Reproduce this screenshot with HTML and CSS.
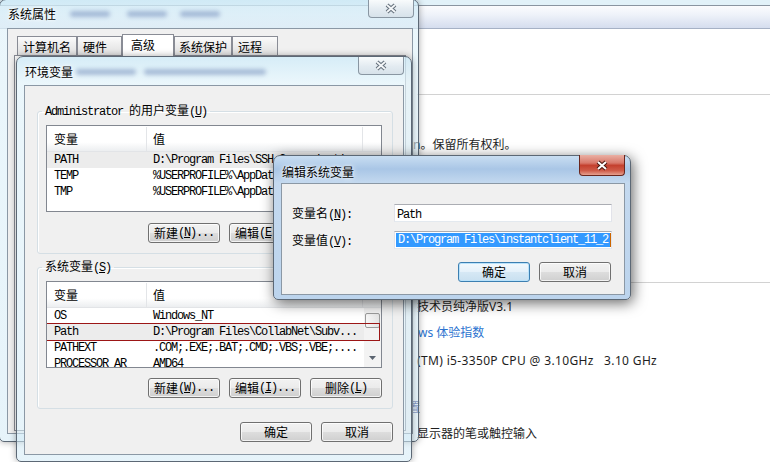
FILE: index.html
```html
<!DOCTYPE html>
<html lang="zh-CN">
<head>
    <meta charset="UTF-8">
    <meta name="viewport" content="width=device-width, initial-scale=1.0">
    <title>环境变量</title>
    <link rel="stylesheet" href="styles.css">
</head>
<body>
<div class="desktop">

    <!-- control panel "system" page behind the dialogs -->
    <div class="panel">
        <div class="panel-glass"></div>
        <div class="panel-bar"></div>
        <div class="panel-body">
            <hr class="panel-rule first">
            <p class="panel-line copy">n。保留所有权利。</p>
            <hr class="panel-rule second">
            <p class="panel-line edition">技术员纯净版V3.1</p>
            <p class="panel-line link">ws 体验指数</p>
            <p class="panel-line cpu">(TM) i5-3350P CPU @ 3.10GHz   3.10 GHz</p>
            <p class="panel-line heading">设置</p>
            <p class="panel-line pen">显示器的笔或触控输入</p>
        </div>
    </div>

    <!-- 系统属性 -->
    <div class="win win-idle sysprops">
        <div class="win-title">
            <span class="win-caption">系统属性</span>
            <span class="ghost sp1"></span>
            <span class="ghost sp2"></span>
            <span class="ghost sp3"></span>
        </div>
        <button class="win-close">
            <svg width="14" height="11" viewBox="0 0 14 11"><path d="M3 2l8 7M11 2l-8 7" stroke="#66727e" stroke-width="4"/><path d="M3 2l8 7M11 2l-8 7" stroke="#f4f7f9" stroke-width="1.8"/></svg>
        </button>
        <div class="win-client sys-client">
            <div class="tabs">
                <span class="tab t1">计算机名</span>
                <span class="tab t2">硬件</span>
                <span class="tab t3 current">高级</span>
                <span class="tab t4">系统保护</span>
                <span class="tab t5">远程</span>
            </div>
            <div class="tab-page"></div>
        </div>
    </div>

    <!-- 环境变量 -->
    <div class="win win-idle envvars">
        <div class="win-title">
            <span class="win-caption">环境变量</span>
            <span class="ghost ev1"></span>
            <span class="ghost ev2"></span>
        </div>
        <button class="win-close">
            <svg width="14" height="11" viewBox="0 0 14 11"><path d="M3 2l8 7M11 2l-8 7" stroke="#66727e" stroke-width="4"/><path d="M3 2l8 7M11 2l-8 7" stroke="#f4f7f9" stroke-width="1.8"/></svg>
        </button>
        <div class="win-client env-client">
            <fieldset class="group">
                <legend><span class="m">Administrator </span>的用户变量<span class="m">(<u>U</u>)</span></legend>
                <div class="list">
                    <div class="list-head">
                        <span class="col-name">变量</span>
                        <span class="col-value">值</span>
                        <span class="col-rest"></span>
                    </div>
                    <div class="list-body">
                        <div class="rows">
                            <div class="row picked"><span class="col-name m">PATH</span><span class="col-value m">D:\Program Files\SSH Communications Sec...</span></div>
                            <div class="row"><span class="col-name m">TEMP</span><span class="col-value m">%USERPROFILE%\AppData\Local\Temp</span></div>
                            <div class="row"><span class="col-name m">TMP</span><span class="col-value m">%USERPROFILE%\AppData\Local\Temp</span></div>
                        </div>
                    </div>
                </div>
                <div class="btn-row">
                    <button class="btn">新建<span class="m">(<u>N</u>)...</span></button>
                    <button class="btn">编辑<span class="m">(<u>E</u>)...</span></button>
                    <button class="btn">删除<span class="m">(<u>D</u>)</span></button>
                </div>
            </fieldset>

            <fieldset class="group second">
                <legend>系统变量<span class="m">(<u>S</u>)</span></legend>
                <div class="list">
                    <div class="list-head">
                        <span class="col-name">变量</span>
                        <span class="col-value">值</span>
                        <span class="col-rest"></span>
                    </div>
                    <div class="list-body">
                        <div class="rows">
                            <div class="row"><span class="col-name m">OS</span><span class="col-value m">Windows_NT</span></div>
                            <div class="row picked"><span class="col-name m">Path</span><span class="col-value m">D:\Program Files\CollabNet\Subv...</span><span class="mark"></span></div>
                            <div class="row"><span class="col-name m">PATHEXT</span><span class="col-value m">.COM;.EXE;.BAT;.CMD;.VBS;.VBE;....</span></div>
                            <div class="row"><span class="col-name m">PROCESSOR_AR</span><span class="col-value m">AMD64</span></div>
                        </div>
                        <div class="scrollbar">
                            <span class="thumb"></span>
                            <svg class="arrow" width="7" height="4" viewBox="0 0 7 4"><path d="M0 0h7L3.5 4z" fill="#5b6470"/></svg>
                        </div>
                    </div>
                </div>
                <div class="btn-row">
                    <button class="btn">新建<span class="m">(<u>W</u>)...</span></button>
                    <button class="btn">编辑<span class="m">(<u>I</u>)...</span></button>
                    <button class="btn">删除<span class="m">(<u>L</u>)</span></button>
                </div>
            </fieldset>

            <div class="env-actions">
                <button class="btn">确定</button>
                <button class="btn">取消</button>
            </div>
        </div>
    </div>

    <!-- 编辑系统变量 -->
    <div class="win win-active editvar">
        <div class="win-title">
            <span class="win-caption">编辑系统变量</span>
        </div>
        <button class="win-close red">
            <svg width="14" height="11" viewBox="0 0 14 11"><path d="M3 2l8 7M11 2l-8 7" stroke="#4e1a12" stroke-width="4.2"/><path d="M3 2l8 7M11 2l-8 7" stroke="#fff" stroke-width="2"/></svg>
        </button>
        <div class="win-client edit-client">
            <div class="edit-form">
                <label>变量名<span class="m">(<u>N</u>):</span></label>
                <div class="textbox"><span class="m">Path</span></div>
                <label>变量值<span class="m">(<u>V</u>):</span></label>
                <div class="textbox selected"><span class="highlight m">D:\Program Files\instantclient_11_2;D:\Program Files</span></div>
            </div>
            <div class="edit-actions">
                <button class="btn default">确定</button>
                <button class="btn">取消</button>
            </div>
        </div>
    </div>

</div>
</body>
</html>
```

FILE: styles.css
```css
* {
    box-sizing: border-box;
}
html, body {
    margin: 0;
}
body {
    width: 770px;
    height: 462px;
    overflow: hidden;
    font: 12px/16px "Noto Sans CJK SC", sans-serif;
    color: #000;
}
.desktop {
    position: relative;
    width: 770px;
    height: 462px;
    overflow: hidden;
    background: #fff;
}

/* ascii runs, drawn half width like the old dialog font */
.m {
    font-family: "Liberation Mono", monospace;
    font-size: 12px;
    letter-spacing: -1.2px;
}

/* background control panel */
.panel {
    height: 100%;
    background: #fff;
}
.panel-glass {
    height: 6px;
    background: #e2f2f9;
    border-bottom: 1px solid #8a95a1;
}
.panel-bar {
    height: 23px;
    background: linear-gradient(#fbfcfe, #eef2f9 40%, #d5ddee);
    border-bottom: 1px solid #a6b1c5;
}
.panel-body {
    padding-left: 417px;
    font-family: "Noto Sans", "Noto Sans CJK SC", sans-serif;
    color: #1e1e1e;
}
.panel-rule {
    margin: 0;
    height: 0;
    border: 0;
    border-top: 1px solid #d2d2d2;
}
.panel-rule.first { margin-top: 65px; }
.panel-rule.second { margin-top: 129px; margin-left: -200px; }
.panel-line {
    margin: 0;
    line-height: 16px;
    white-space: pre;
}
.copy { margin-top: 42px; margin-left: -4px; }
.edition { margin-top: 16px; }
.link { margin-top: 10px; margin-left: 1px; color: #2b73cf; }
.cpu { margin-top: 12px; letter-spacing: 0.35px; }
.heading { margin-top: 31px; margin-left: -21px; color: #1e3287; }
.pen { margin-top: 10px; }

/* windows */
.win {
    position: absolute;
    display: flex;
    flex-direction: column;
    border: 1px solid #5c6875;
    border-radius: 7px 7px 5px 5px;
}
.win-idle {
    background: linear-gradient(rgba(204,232,245,0.8), rgba(226,243,250,0.7) 26px, rgba(210,234,246,0.55));
    box-shadow: 0 0 7px rgba(0,0,0,0.35);
}
.win-active {
    background: linear-gradient(#c9def2, #a9c6e6 13px, #c4d9ef 27px, #bcd4ed);
    box-shadow: 2px 3px 14px rgba(0,0,0,0.6);
}
.win-title {
    display: flex;
    align-items: center;
    flex: none;
    padding-left: 1px;
}
.win-caption {
    text-shadow: 0 0 6px #fff, 0 0 3px #fff;
}
.ghost {
    height: 6px;
    border-radius: 3px;
    background: rgba(70,100,160,0.38);
    filter: blur(2px);
}
.sp1 { width: 40px; margin-left: 14px; }
.sp2 { width: 40px; margin-left: 17px; }
.sp3 { width: 40px; margin-left: 13px; }
.ev1 { width: 60px; margin-left: 3px; }
.ev2 { width: 122px; margin-left: 8px; }

.win-client {
    flex: 1;
    background: #f0f0f0;
    border: 1px solid #8b98a5;
}
.win-close {
    position: absolute;
    top: 0;
    width: 46px;
    height: 18px;
    padding: 0;
    display: flex;
    align-items: center;
    justify-content: center;
    border: 1px solid #8996a2;
    border-top: 0;
    border-radius: 0 0 4px 4px;
    background: linear-gradient(#f8fbfc, #e3ebf1 55%, #d7e2ea);
}
.win-close.red {
    top: -1px;
    height: 21px;
    border: 1px solid #6a261d;
    border-top: 0;
    background: linear-gradient(#eab0a4, #d8786a 40%, #c4402e 52%, #cf5b48 78%, #e6a08f);
}

.sysprops {
    left: -1px;
    top: -1px;
    width: 420px;
    height: 443px;
    padding: 0 5px 7px 7px;
    z-index: 1;
}
.sysprops .win-title { height: 28px; }
.sysprops .win-close { right: 4px; }

.envvars {
    left: 16px;
    top: 56px;
    width: 396px;
    height: 406px;
    padding: 0 7px 6px;
    z-index: 2;
}
.envvars .win-title { height: 28px; padding-top: 1px; }
.envvars .win-close { right: 7px; }

.editvar {
    left: 273px;
    top: 155px;
    width: 358px;
    height: 145px;
    padding: 0 5px 4px 7px;
    z-index: 3;
}
.editvar .win-title { height: 27px; padding-top: 4px; }
.editvar .win-close { right: 5px; }

/* system properties tabs */
.sys-client {
    display: flex;
    flex-direction: column;
    padding: 7px 6px 2px;
}
.tabs {
    display: flex;
    align-items: flex-end;
    height: 19px;
    margin-left: 3px;
}
.tab {
    height: 19px;
    padding: 2px 0 0 5px;
    border: 1px solid #898c95;
    border-bottom: 0;
    background: linear-gradient(#fbfbfb, #ececec 50%, #e2e2e2);
    white-space: nowrap;
}
.tab.current {
    position: relative;
    z-index: 1;
    height: 22px;
    margin-bottom: -1px;
    padding-left: 8px;
    background: #fff;
}
.t1 { width: 60px; }
.t2 { width: 45px; }
.t3 { width: 52px; }
.t4 { width: 58px; padding-left: 4px; }
.t5 { width: 46px; }
.tab-page {
    flex: 1;
    background: #fff;
    border: 1px solid #898c95;
}

/* environment variables dialog */
.group {
    width: 356px;
    margin: 16px 0 0 12px;
    padding: 5px 10px 10px 8px;
    border: 1px solid #d5dfe5;
    border-radius: 3px;
    box-shadow: inset 1px 1px 0 #fff;
}
.group.second {
    margin-top: 4px;
}
.group legend {
    margin-left: -4px;
    padding: 0 3px;
    line-height: 16px;
    white-space: nowrap;
}
.list {
    width: 336px;
    height: 87px;
    border: 1px solid #828790;
    background: #fff;
    overflow: hidden;
}
.list-head {
    display: flex;
    height: 26px;
    padding-top: 1px;
    line-height: 23px;
    background: linear-gradient(#fff 65%, #eceef0);
    border-bottom: 1px solid #e2e4e7;
}
.col-name {
    flex: none;
    width: 100px;
    padding-left: 7px;
    white-space: nowrap;
    overflow: hidden;
}
.col-value {
    flex: none;
    width: 216px;
    padding-left: 6px;
    white-space: nowrap;
    overflow: hidden;
}
.list-head .col-name,
.list-head .col-value {
    border-right: 1px solid #e3e5e8;
}
.col-rest {
    flex: 1;
}
.list-body {
    display: flex;
}
.rows {
    flex: 1;
}
.row {
    position: relative;
    display: flex;
    height: 16px;
    line-height: 16px;
}
.row.picked {
    background: #ececec;
}
.mark {
    position: absolute;
    left: -1px;
    top: -1px;
    width: 334px;
    height: 18px;
    border: 1px solid #9c1616;
}
.scrollbar {
    flex: none;
    width: 17px;
    height: 60px;
    display: flex;
    flex-direction: column;
    align-items: center;
    background: #f3f3f3;
}
.thumb {
    width: 15px;
    height: 15px;
    margin-top: 5px;
    border: 1px solid #9a9a9a;
    border-radius: 2px;
    background: linear-gradient(90deg, #f7f7f7, #e4e4e4);
}
.arrow {
    margin-top: auto;
    margin-bottom: 8px;
}
.btn-row,
.env-actions,
.edit-actions {
    display: flex;
    justify-content: flex-end;
    gap: 9px;
}
.btn-row {
    margin-top: 11px;
}
.second .btn-row {
    margin-top: 10px;
}
.env-actions {
    width: 356px;
    margin: 13px 0 0 12px;
}
.btn {
    width: 72px;
    height: 20px;
    padding: 0;
    display: flex;
    align-items: center;
    justify-content: center;
    font: inherit;
    line-height: 16px;
    color: #000;
    border: 1px solid #707070;
    border-radius: 3px;
    background: linear-gradient(#f2f2f2, #ebebeb 48%, #dddddd 52%, #cfcfcf);
    box-shadow: inset 0 0 0 1px rgba(255,255,255,0.75);
}
.btn.default {
    border-color: #3c7fb1;
    background: linear-gradient(#f3f9fd, #e5f1fa 48%, #d6e8f5 52%, #c9e0f0);
    box-shadow: inset 0 0 0 1px #b9e2fb;
}

/* edit system variable dialog */
.edit-form {
    display: grid;
    grid-template-columns: 102px 218px;
    grid-auto-rows: 18px;
    row-gap: 9px;
    padding: 20px 0 0 10px;
}
.edit-form label {
    line-height: 18px;
    white-space: nowrap;
}
.textbox {
    height: 18px;
    padding: 0 2px;
    line-height: 16px;
    background: #fff;
    border: 1px solid #e2e3ea;
    border-top-color: #abadb3;
    border-bottom-color: #e3e9ef;
    white-space: nowrap;
    overflow: hidden;
}
.textbox.selected {
    padding: 1px 0 0 1px;
}
.highlight {
    display: block;
    height: 14px;
    line-height: 14px;
    padding-left: 2px;
    background: #3399ff;
    color: #fff;
    overflow: hidden;
    border-right: 1px solid #cc6600;
}
.edit-actions {
    width: 319px;
    margin: 13px 0 0 10px;
}
```
